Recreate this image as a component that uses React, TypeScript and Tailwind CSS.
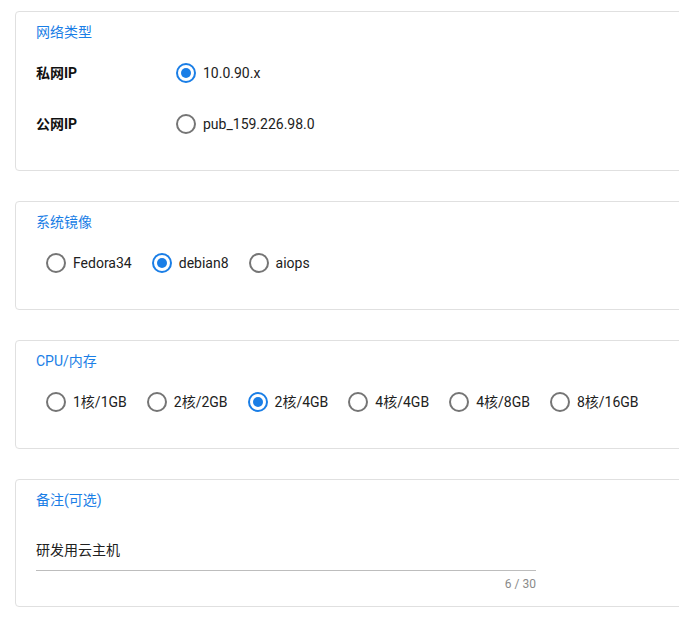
import React from "react";

const FONT = { fontFamily: 'Roboto, "Noto Sans CJK SC", sans-serif' };

function Radio({ checked, label }: { checked?: boolean; label: string }) {
  return (
    <label className="flex items-center h-[42px] gap-[7px] mr-[20px] cursor-pointer">
      <span
        className={
          "flex items-center justify-center w-5 h-5 rounded-full border-2 " +
          (checked ? "border-[#1a7ee6]" : "border-[#757575]")
        }
      >
        {checked && <span className="w-[10px] h-[10px] rounded-full bg-[#1a7ee6]" />}
      </span>
      <span className="text-[14px] leading-5 text-[#212121]">{label}</span>
    </label>
  );
}

function Panel({ title, children, className = "" }: { title: string; children: React.ReactNode; className?: string }) {
  return (
    <div className={"w-[720px] border border-[#e0e0e0] rounded-[4px] bg-white pl-5 pt-[10px] " + className}>
      <div className="text-[14px] leading-5 text-[#1a7ee6]">{title}</div>
      {children}
    </div>
  );
}

export default function App() {
  return (
    <div className="w-[679px] h-[628px] overflow-hidden bg-white" style={FONT}>
      <div className="pl-[15px] pt-[11px] flex flex-col gap-[30px]">
        <Panel title="网络类型" className="pb-[25px]">
          <div className="mt-[10px] flex flex-col gap-[9px]">
            <div className="flex items-center h-[42px]">
              <div className="w-[140px] text-[14px] font-bold text-[#111]">私网IP</div>
              <Radio checked label="10.0.90.x" />
            </div>
            <div className="flex items-center h-[42px]">
              <div className="w-[140px] text-[14px] font-bold text-[#111]">公网IP</div>
              <Radio label="pub_159.226.98.0" />
            </div>
          </div>
        </Panel>
        <Panel title="系统镜像" className="pb-[25px]">
          <div className="mt-[10px] pl-[10px] flex items-center">
            <Radio label="Fedora34" />
            <Radio checked label="debian8" />
            <Radio label="aiops" />
          </div>
        </Panel>
        <Panel title="CPU/内存" className="pb-[25px]">
          <div className="mt-[10px] pl-[10px] flex items-center">
            <Radio label="1核/1GB" />
            <Radio label="2核/2GB" />
            <Radio checked label="2核/4GB" />
            <Radio label="4核/4GB" />
            <Radio label="4核/8GB" />
            <Radio label="8核/16GB" />
          </div>
        </Panel>
        <Panel title="备注(可选)" className="pb-[14px]">
          <div className="w-[500px] mt-[30px]">
            <div className="pb-[10px] border-b border-[#bdbdbd] text-[14px] leading-5 text-[#212121]">
              研发用云主机
            </div>
            <div className="mt-[5px] text-right text-[12px] leading-4 text-[#8a8a8a]">6 / 30</div>
          </div>
        </Panel>
      </div>
    </div>
  );
}
